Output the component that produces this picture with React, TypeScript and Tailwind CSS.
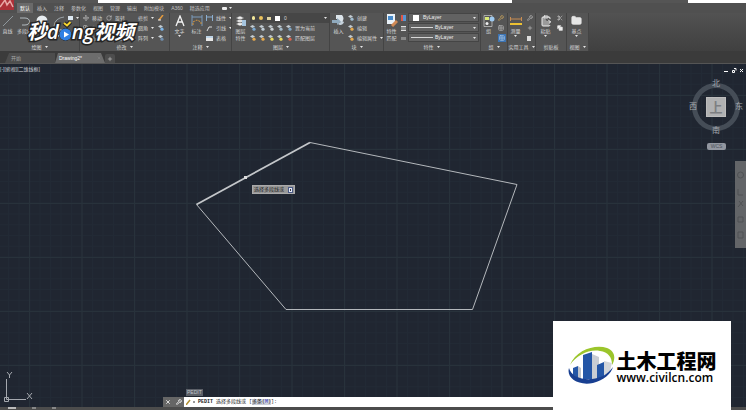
import { ReactNode } from "react";
import {
  ClipboardPaste,
  Copy,
  Folder,
  Grid2x2,
  Move,
  Plus,
  RotateCw,
  Scissors,
  Wrench,
  X,
} from "lucide-react";

const TABS = ["默认", "插入", "注释", "参数化", "视图", "管理", "输出", "附加模块", "A360", "精选应用"];

function Caret() {
  return (
    <svg className="h-[2px] w-[3px] shrink-0" viewBox="0 0 3 2" fill="#e5e5e5">
      <path d="M0 0h3L1.5 2z" />
    </svg>
  );
}

function Panel({
  title,
  className,
  children,
  caret = true,
}: {
  title: string;
  className: string;
  children: ReactNode;
  caret?: boolean;
}) {
  return (
    <section
      className={`flex shrink-0 flex-col overflow-hidden border-r border-[#444] bg-[#555] ${className}`}
    >
      <div className="flex h-[30px] gap-[2px]">{children}</div>
      <h2 className="flex h-2 items-center justify-center gap-[3px] whitespace-nowrap text-[5px] leading-[8px]">
        {title}
        {caret && <Caret />}
      </h2>
    </section>
  );
}

function Big({ label, children, caret }: { label: string; children: ReactNode; caret?: boolean }) {
  return (
    <button className="flex w-[15px] shrink-0 flex-col items-center text-[5px] leading-[7px] break-keep">
      <span className="flex h-[15px] items-center">{children}</span>
      <span>{label}</span>
      {caret && <Caret />}
    </button>
  );
}

function Row({ label, children, caret }: { label?: string; children: ReactNode; caret?: boolean }) {
  return (
    <button className="flex h-[10px] items-center gap-[3px] whitespace-nowrap text-[5px] leading-[8px]">
      {children}
      {label && <span>{label}</span>}
      {caret && <Caret />}
    </button>
  );
}

function LayerIcon({ tint = "#e5a94e" }: { tint?: string }) {
  return (
    <svg className="h-[6px] w-[6px] shrink-0" viewBox="0 0 6 6">
      <path d="M0 1.5 2.5 0 5 1.5 2.5 3z" fill="#c3ccd2" />
      <circle cx="4" cy="4.200" r="1.600" fill={tint} />
    </svg>
  );
}

function InsertIcon() {
  return (
    <svg className="h-[13px] w-[13px]" viewBox="0 0 13 13">
      <path d="M4 1h6c2 2 2 5 0 7H6V5H4z" fill="#dce4ea" />
      <path d="M0 6h5V4l4 3.500-4 3.500V9H0z" fill="#8fa9bd" />
      <path d="M6 10c2 2 5 1 6-2l-2-1z" fill="#c6d2dc" />
    </svg>
  );
}

function Ribbon() {
  return (
    <div className="flex h-[38px] overflow-hidden bg-gradient-to-b from-[#525252] to-[#404040] text-[#d6d6d6]">
      <Panel title="绘图" className="w-[80px]">
        <Big label="直线">
          <svg className="h-3 w-3" viewBox="0 0 12 12" stroke="#8f979c">
            <path d="M1 11 11 1" />
          </svg>
        </Big>
        <Big label="多段线">
          <svg className="h-3 w-3" viewBox="0 0 12 12" fill="none" stroke="#b3bbc0">
            <path d="M1 3h5c6 0 6 7 0 7H3" />
          </svg>
        </Big>
        <Big label="圆" caret>
          <svg className="h-3 w-3" viewBox="0 0 12 12">
            <circle cx="6" cy="6" r="5.500" fill="#e8edf0" />
          </svg>
        </Big>
        <Big label="圆弧" caret>
          <svg className="h-3 w-3" viewBox="0 0 12 12" fill="none" stroke="#9aa2a7">
            <path d="M1 11Q2 3 11 2" />
          </svg>
        </Big>
        <div className="flex flex-col">
          <Row caret>
            <span className="h-1 w-[5px] bg-[#dce8f2]" />
          </Row>
        </div>
      </Panel>
      <Panel title="修改" className="w-[90px] px-[3px]">
        <div className="flex shrink-0 flex-col pr-[2px]">
          <Row label="移动">
            <Move size={6} />
          </Row>
          <Row label="复制">
            <Copy size={6} />
          </Row>
          <Row label="拉伸">
            <Copy size={6} />
          </Row>
        </div>
        <div className="flex flex-col">
          <Row label="旋转">
            <RotateCw size={6} />
          </Row>
          <Row label="镜像">
            <RotateCw size={6} />
          </Row>
          <Row label="缩放">
            <Grid2x2 size={6} />
          </Row>
        </div>
        <div className="ml-auto flex flex-col">
          <Row label="修剪" caret>
            {null}
          </Row>
          <Row label="圆角" caret>
            {null}
          </Row>
          <Row label="阵列" caret>
            {null}
          </Row>
        </div>
        <div className="flex w-[10px] flex-col pl-[2px]">
          <Row>
            <svg className="h-[6px] w-[6px]" viewBox="0 0 6 6">
              <path d="M1 5 5 0" stroke="#e59a3c" strokeWidth="1.500" />
              <path d="M0 5h3" stroke="#eee" />
            </svg>
          </Row>
          <Row>
            <LayerIcon tint="#7db6e8" />
          </Row>
          <Row>
            <LayerIcon tint="#718fae" />
          </Row>
        </div>
      </Panel>
      <Panel title="注释" className="w-[62px] px-[2px]">
        <Big label="文字" caret>
          <svg className="h-3 w-3" viewBox="0 0 12 12" fill="none" stroke="#f3f3f3" strokeWidth="1.300">
            <path d="M2 11 6 1l4 10M3.500 7h5" />
          </svg>
        </Big>
        <Big label="标注">
          <svg className="h-3 w-3" viewBox="0 0 12 12" fill="none">
            <path d="M1 0v11M11 0v11M1 2h10" stroke="#7d9cbd" />
            <path d="M2 10V7l4-2 4 2v3" stroke="#d6983f" strokeDasharray="2 1" />
          </svg>
        </Big>
        <div className="flex flex-col">
          <Row label="线性" caret>
            <svg className="h-[6px] w-[7px]" viewBox="0 0 7 6" fill="none" stroke="#8baed0">
              <path d="M.5 0v6M6.500 0v6M0 2h7" />
            </svg>
          </Row>
          <Row label="引线" caret>
            <svg className="h-[6px] w-[7px]" viewBox="0 0 7 6" fill="none" stroke="#ddd">
              <path d="M1 6 3 2h3" />
            </svg>
          </Row>
          <Row label="表格">
            <span className="h-[5px] w-[7px] border-t-2 border-[#bcd2e5] bg-[#e8e8e8]" />
          </Row>
        </div>
      </Panel>
      <Panel title="图层" className="w-[98px] pl-px">
        <Big label="图层 特性">
          <svg className="h-3 w-3" viewBox="0 0 12 12">
            <path d="M1 3 5 1l4 2-4 2zM1 6l4-2 4 2-4 2zM1 9l4-2 4 2-4 2z" fill="#f1f1f1" stroke="#666" strokeWidth=".5" />
            <path d="M7 5h4v6H7z" fill="#a6c5df" />
          </svg>
        </Big>
        <div className="flex min-w-0 flex-1 flex-col">
          <button className="flex h-[10px] w-full items-center gap-1 bg-[#464646] px-[2px] text-[5px] leading-[8px]">
            <span className="h-1 w-[3px] rounded-full bg-[#f4e89a]" />
            <span className="h-1 w-1 rounded-full bg-[#ecc35d]" />
            <span className="h-[3px] w-1 bg-[#e0d3a0]" />
            <span className="h-[5px] w-[5px] bg-white" />
            <span>0</span>
            <span className="ml-auto">
              <Caret />
            </span>
          </button>
          <Row label="置为当前">
            <LayerIcon tint="#79a9d3" />
            <LayerIcon tint="#c0ced8" />
            <LayerIcon tint="#cad0d4" />
            <LayerIcon tint="#a4bccc" />
            <LayerIcon tint="#80a7c6" />
          </Row>
          <Row label="匹配图层">
            <LayerIcon />
            <LayerIcon />
            <LayerIcon tint="#ead85a" />
            <LayerIcon tint="#ead85a" />
            <LayerIcon tint="#d96550" />
          </Row>
        </div>
      </Panel>
      <Panel title="块" className="w-[54px] pl-px">
        <Big label="插入">
          <InsertIcon />
        </Big>
        <div className="flex flex-col">
          <Row label="创建">
            <LayerIcon tint="#a0bcd0" />
          </Row>
          <Row label="编辑">
            <LayerIcon />
          </Row>
          <Row label="编辑属性" caret>
            <LayerIcon />
          </Row>
        </div>
      </Panel>
      <Panel title="特性" className="w-[97px] pr-px">
        <Big label="特性 匹配">
          <svg className="h-[13px] w-3" viewBox="0 0 12 13">
            <path d="M1 0h8v10H1z" fill="#e9f1f8" />
            <path d="M2 2h5v4H2z" fill="#478bcc" />
            <path d="M6 12 11 7" stroke="#d18a55" strokeWidth="3" />
          </svg>
        </Big>
        <div className="flex shrink-0 flex-col">
          <Row>
            <span className="h-[6px] w-[5px] border-l-2 border-[#df5548] bg-[#5794d2]" />
          </Row>
          <Row>
            <span className="h-[5px] w-[5px] border-y border-[#ddd] bg-[#888]" />
          </Row>
          <Row>
            <span className="h-[3px] w-[5px] bg-[#888]" />
          </Row>
        </div>
        <div className="flex min-w-0 flex-1 flex-col gap-[1px]">
          {[0, 1, 2].map((i) => (
            <button
              key={i}
              className="flex h-[9px] w-full items-center gap-[2px] border border-[#454545] bg-[#626262] px-[2px] text-[5px] leading-[7px] text-[#eee]"
            >
              {i === 0 ? (
                <span className="mx-[2px] h-[6px] w-[6px] bg-white" />
              ) : (
                <span className="h-px w-[22px] bg-[#d6d6d6]" />
              )}
              <span>ByLayer</span>
              <span className="ml-auto">
                <Caret />
              </span>
            </button>
          ))}
        </div>
      </Panel>
      <Panel title="组" className="w-[27px]">
        <Big label="组">
          <svg className="h-3 w-3" viewBox="0 0 12 12">
            <path d="M1 .5h8v11H1z" fill="none" stroke="#ccc" strokeWidth=".7" />
            <path d="M2 2h4v3H2z" fill="#d9e876" />
            <circle cx="9" cy="4" r="2.500" fill="#9ecaf0" />
            <circle cx="4" cy="8.500" r="1.500" fill="#eee" />
          </svg>
        </Big>
        <div className="flex flex-col">
          <Row>
            <Wrench size={6} color="#efbe62" />
          </Row>
          <Row>
            <Grid2x2 size={6} />
          </Row>
          <Row>
            <span className="flex bg-[#3c74b4] p-px">
              <Grid2x2 size={6} color="#cfe0f2" />
            </span>
          </Row>
        </div>
      </Panel>
      <Panel title="实用工具" className="w-[28px]">
        <Big label="测量" caret>
          <svg className="h-3 w-3" viewBox="0 0 12 12">
            <path d="M0 4h12M.5 2v4M11.500 2v4" stroke="#c98d52" />
            <path d="M0 8h12v2H0z" fill="#ecc132" />
          </svg>
        </Big>
        <div className="flex flex-col pl-[2px]">
          <Row>
            <Wrench size={6} />
          </Row>
          <Row>
            <Plus size={6} />
          </Row>
          <Row>
            <span className="h-[5px] w-1 bg-[#ddd]" />
          </Row>
        </div>
      </Panel>
      <Panel title="剪贴板" className="w-[31px] px-[2px]" caret={false}>
        <Big label="粘贴" caret>
          <ClipboardPaste size={12} fill="#9a9a9a" color="#ececec" />
        </Big>
        <div className="flex flex-col pl-[2px]">
          <Row>
            <Scissors size={6} />
          </Row>
          <Row>
            <Copy size={6} fill="#eee" />
          </Row>
        </div>
      </Panel>
      <Panel title="视图" className="w-[22px] px-[2px]">
        <Big label="基点" caret>
          <Folder size={11} fill="#e6e6e6" color="#e6e6e6" />
        </Big>
      </Panel>
    </div>
  );
}

function Drawing() {
  return (
    <svg className="absolute inset-0 h-full w-full">
      <defs>
        <pattern id="minor" x="8" y="9" width="10.500" height="10.800" patternUnits="userSpaceOnUse">
          <path d="M0 .5h10.500M.5 0v10.800" stroke="#222a35" strokeWidth="1" fill="none" />
        </pattern>
        <pattern id="major" x="29" y="31" width="52.500" height="54" patternUnits="userSpaceOnUse">
          <path d="M0 .5h52.500M.5 0v54" stroke="#28323b" strokeWidth="1" fill="none" />
        </pattern>
      </defs>
      <rect width="100%" height="100%" fill="url(#minor)" />
      <rect width="100%" height="100%" fill="url(#major)" />
      <path d="M310 78.500 517 120.500 472.500 245.500H286L196.500 140.500" fill="none" stroke="#b4b8bc" strokeWidth="1" />
      <path d="M196.500 140.500 310 78.500" stroke="#c4c7ca" strokeWidth="1.800" />
      <rect x="244" y="112" width="3" height="3" fill="#dcdcdc" />
    </svg>
  );
}

function ViewCube() {
  return (
    <div className="absolute top-[14px] right-[3px] grid h-[58px] w-[54px] place-items-center text-[8px] leading-[10px] text-[#a3a8ae]">
      <svg className="absolute inset-0 h-full w-full" viewBox="0 0 54 58" fill="none">
        <circle cx="27" cy="29" r="21.500" stroke="#454d57" strokeWidth="5" />
      </svg>
      <span className="absolute top-[1px]">北</span>
      <span className="absolute bottom-0">南</span>
      <span className="absolute left-0">西</span>
      <span className="absolute right-0">东</span>
      <button className="relative h-5 w-5 border border-[#bdbdbd] bg-[#b0b1b2] text-[13px] leading-[17px] font-bold text-[#7d7f82]">
        上
      </button>
    </div>
  );
}

function VideoMark() {
  return (
    <div className="absolute top-[19px] left-[27px] flex items-center text-[20px] leading-[26px] font-bold text-white italic [-webkit-text-stroke:3px_#252525] [paint-order:stroke_fill]">
      <span>秒</span>
      <span className="font-['Open_Sans'] font-semibold">d</span>
      <svg className="h-[26px] w-[13px] overflow-visible" viewBox="0 0 13 26">
        <circle cx="6.500" cy="15.500" r="6" fill="#2f80e4" stroke="#252525" />
        <path d="m5 12.500 5 3-5 3z" fill="#fff" />
        <path d="m5 4 3 2.500L11.500 3" fill="none" stroke="#252525" strokeWidth="4" />
        <path d="m5 4 3 2.500L11.500 3" fill="none" stroke="#f5d52f" strokeWidth="2" />
      </svg>
      <span className="font-['Open_Sans'] font-semibold">ng</span>
      <span>视频</span>
    </div>
  );
}

function SiteBanner() {
  return (
    <div className="absolute right-[15px] bottom-0 flex h-[89px] w-[178px] items-center justify-center gap-[2px] bg-white text-black">
      <svg className="h-[40px] w-[47px] shrink-0" viewBox="0 0 47 40">
        <path d="M2 19C8 4 27-2 39 2c8 3 9 10 5 17 0-8-4-13-12-14C21 3 9 9 2 19z" fill="#9bc52b" />
        <path d="m24 8 7 3v22h-7z" fill="#c9cdd3" />
        <path d="m15 9 9-3v27h-9z" fill="#2456a6" />
        <path d="m5 22 5-2v12l-5-3z" fill="#2456a6" />
        <path d="m10 20 3 2v10h-3z" fill="#bfc4cc" />
        <path d="m36 15 8 2-2 8-6 5z" fill="#d3d6da" />
        <path d="m29 19 7-3v15l-7 2z" fill="#2456a6" />
        <path d="M1 22c-3 10 9 18 24 15 11-3 18-9 20-16-6 8-12 11-21 12C13 34 3 30 1 22z" fill="#183f91" />
      </svg>
      <div className="flex flex-col pt-1">
        <strong className="text-[20px] leading-[20px] font-black">土木工程网</strong>
        <a href="#" className="font-['Open_Sans'] text-[12px] leading-[12px] font-semibold">
          www.civilcn.com
        </a>
      </div>
    </div>
  );
}

export default function App() {
  return (
    <div className="relative flex h-screen flex-col overflow-hidden bg-[#202631] font-['Liberation_Sans','Noto_Sans_CJK_SC',sans-serif]">
      <header className="shrink-0 bg-[#3e3e3e]">
        <div className="flex h-[3px]">
          <div className="w-[98px] bg-[#555]" />
          <div className="flex-1 bg-white" />
          <div className="w-[176px] bg-[#555]" />
          <div className="w-[58px] bg-white" />
        </div>
        <nav className="flex h-[10px] items-center bg-[#505050] pl-[17px] text-[5px] leading-[9px] text-[#c4c4c4]">
          {TABS.map((tab, i) => (
            <button key={tab} className={`mr-px h-[10px] px-[3px] ${i === 0 ? "bg-[#6a6a6a] text-white" : ""}`}>
              {tab}
            </button>
          ))}
          <button className="ml-2 flex items-center gap-[2px]">
            <span className="h-[3px] w-[5px] rounded-[1px] bg-[#eee]" />
            <Caret />
          </button>
        </nav>
        <Ribbon />
        <div className="flex h-[13px] items-end border-b border-[#555] bg-[#3b3b3b] pl-[5px] text-[5px] leading-[9px] text-[#a5a5a5]">
          <button className="h-[10px] w-[50px] bg-[#4d4d4d] px-[6px] text-left [clip-path:polygon(4px_0,100%_0,100%_100%,0_100%)]">
            开始
          </button>
          <button className="flex h-[10px] w-[50px] items-center justify-between bg-[#6c6c6c] px-1 text-white [clip-path:polygon(3px_0,46px_0,100%_100%,0_100%)]">
            Drawing2*
            <X size={4} color="#999" />
          </button>
          <button className="flex h-[9px] w-[10px] items-center justify-center rounded-t-[2px] bg-[#4d4d4d]">
            <Plus size={6} color="#ddd" />
          </button>
        </div>
      </header>

      <button className="absolute top-0 left-0 h-[10px] w-[14px] bg-[#ad3038]">
        <svg viewBox="0 0 14 10">
          <path d="m0 7 5-7 2 5 3-4 3 6" fill="none" stroke="#e8a8a6" strokeWidth="1.500" />
        </svg>
      </button>

      <main className="relative min-h-0 flex-1">
        <Drawing />
        <p className="absolute top-[1px] left-0 text-[5px] leading-[8px] text-[#d1d4d8]">[-][俯视][二维线框]</p>
        <div className="absolute top-[4px] right-[2px] flex text-white">
          <svg className="h-[5px] w-[20px]" viewBox="0 0 20 5" fill="none" stroke="currentColor">
            <path d="M0 3.500h4M10.500 2.500v2h-2v-2zM10 .5h2v2M16 1l3 3M19 1l-3 3" />
          </svg>
        </div>
        <ViewCube />
        <button className="absolute top-[79px] right-[20px] h-[7px] w-[19px] rounded-[2px] bg-[#9297a0] text-[5px] leading-[7px] text-[#4c515a]">
          WCS
        </button>
        <aside className="absolute top-[97px] right-0 flex h-[87px] w-[11px] flex-col items-center justify-around bg-[#636568]">
          <svg className="h-[70px] w-[7px]" viewBox="0 0 7 70" fill="none" stroke="#505255">
            <circle cx="3.500" cy="5" r="3" />
            <path d="M1 19v6h5M1 37l5-6M2 31l4 5M1 47h5v5H1zM1 62h5v6H1z" />
          </svg>
        </aside>

        <div className="absolute top-[121px] left-[252px] flex h-[9px] w-[43px] items-center justify-between border border-[#aaa] bg-[#999] px-px text-[5px] leading-[7px] text-[#202020]">
          <span>选择多段线或</span>
          <span className="flex h-[6px] w-[5px] items-center justify-center border border-[#4a5a86] bg-[#e5eaf5]">
            <span className="h-[2px] w-px bg-[#334]" />
          </span>
        </div>

        <svg className="absolute bottom-[4px] left-[3px] h-[32px] w-[31px]" viewBox="0 0 31 32" fill="none" stroke="#a5a9af">
          <path d="M3.500 28.500V8M3.500 28.500H23M1.500 26.500h4v4h-4z" />
          <path d="m4 1 2.500 3L9 1M6.500 4v3M24 22l5 6M29 22l-5 6" />
        </svg>

        <span className="absolute bottom-[11px] left-[186px] h-[7px] bg-[#5c6068] px-px text-[5px] leading-[7px] text-[#bfc3c8]">
          PEDIT
        </span>
      </main>

      <footer className="shrink-0">
        <div className="absolute right-[28px] bottom-[3px] left-[163px] flex h-[10px] items-center bg-white font-['Liberation_Mono','Noto_Sans_CJK_SC',monospace] text-[5px] leading-[10px] text-[#222]">
          <span className="flex h-full w-[21px] items-center justify-around bg-[#666] text-white">
            <X size={6} strokeWidth={3} />
            <Wrench size={6} strokeWidth={3} />
          </span>
          <label className="flex flex-1 items-center gap-[3px] pl-[2px] whitespace-pre">
            <svg className="h-[6px] w-[9px]" viewBox="0 0 9 6">
              <path d="M0 6 4 1" stroke="#b18f33" strokeWidth="1.500" />
              <path d="M7 3h2" stroke="#333" />
            </svg>
            <span className="font-bold">PEDIT</span>
            <span>选择多段线或</span>
            <span>
              [<span className="bg-[#ccd0da]">多条(<span className="text-[#3333c0]">M</span>)</span>]:
            </span>
            <input className="min-w-0 flex-1 bg-transparent outline-none" />
          </label>
        </div>
        <div className="flex h-[3px] gap-4 bg-[#4c4c4c] pl-2">
          <span className="h-[2px] w-2 bg-[#bbb]" />
          <span className="h-[2px] w-1 bg-[#888]" />
          <span className="h-[2px] w-1 bg-[#888]" />
        </div>
      </footer>

      <VideoMark />
      <SiteBanner />
    </div>
  );
}
